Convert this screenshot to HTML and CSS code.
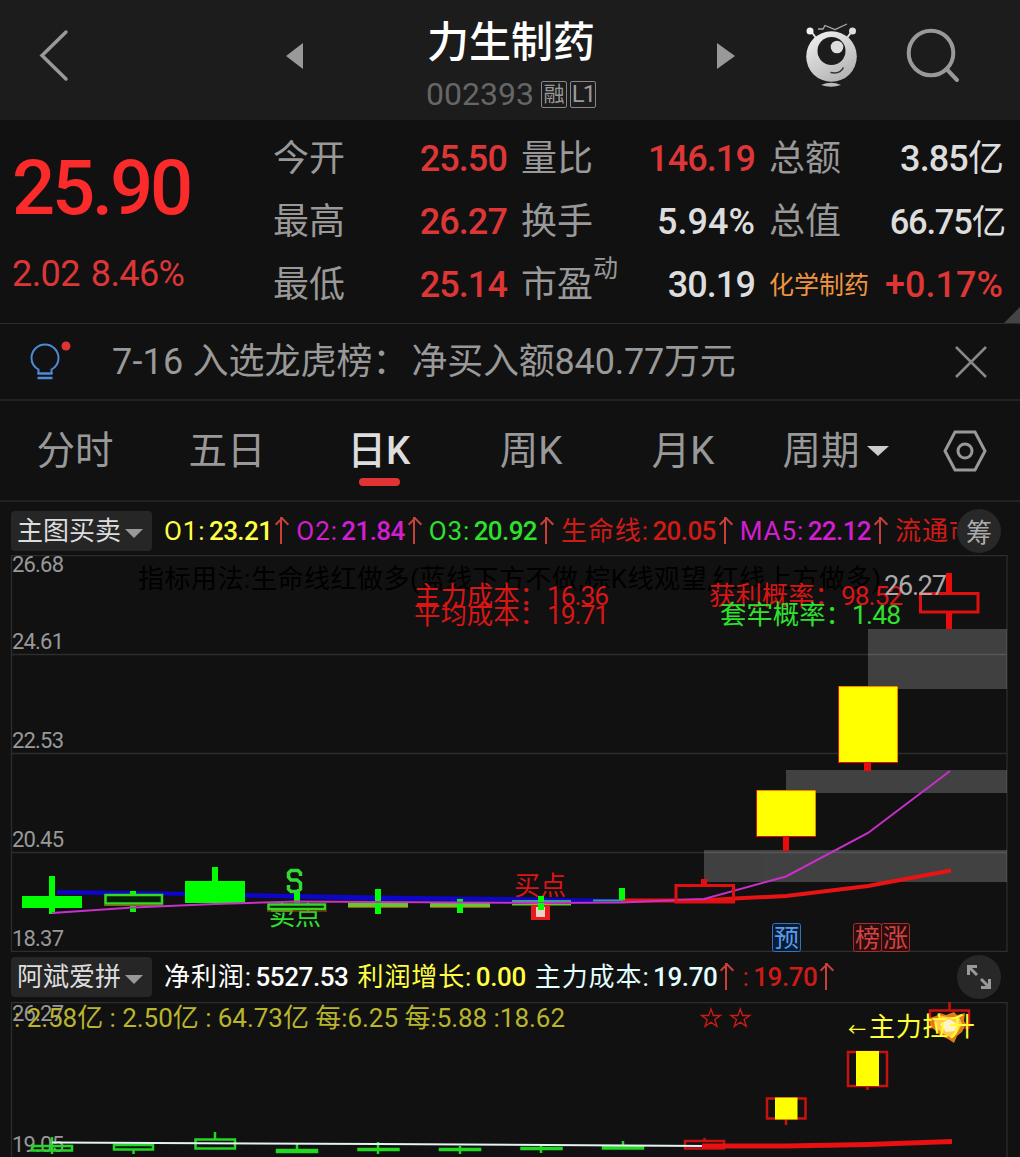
FILE: index.html
```html
<!DOCTYPE html>
<html lang="zh-CN">
<head>
<meta charset="UTF-8">
<meta name="viewport" content="width=device-width, initial-scale=1.0">
<title>力生制药 002393</title>
<link rel="stylesheet" href="styles.css">
</head>
<body>

<!-- 顶部导航 -->
<header class="header">
    <svg class="icon-back" width="32" height="56" viewBox="0 0 32 56"><path d="M28 5 4 28.500 28 52"/></svg>
    <svg class="icon-prev" width="20" height="28" viewBox="0 0 20 28"><path d="M0 14 17 1V27Z"/></svg>
    <div class="stock">
        <h1 class="stock-name">力生制药</h1>
        <div class="stock-code"><span class="code">002393</span><span class="tag">融</span><span class="tag l1">L1</span></div>
    </div>
    <svg class="icon-next" width="20" height="28" viewBox="0 0 20 28"><path d="M19 14 1 1V27Z"/></svg>
    <svg class="icon-robot" width="56" height="68" viewBox="0 0 56 68">
        <defs>
            <linearGradient id="ball" x1="0" y1="0" x2="0.6" y2="1">
                <stop offset="0" stop-color="#f4f4f4"/>
                <stop offset="1" stop-color="#b5b5b5"/>
            </linearGradient>
        </defs>
        <path d="M15 9 20 9 22 5.500 32 9.500 44 4" fill="none" stroke="#aaa" stroke-width="1.3"/>
        <path d="M8 11 13 18M49 11 44 18" stroke="#ddd" stroke-width="2"/>
        <circle cx="7" cy="11" r="3.5" fill="#f2f2f2"/>
        <circle cx="49.500" cy="11" r="3.500" fill="#ddd"/>
        <circle cx="28.500" cy="36.500" r="25.300" fill="url(#ball)"/>
        <circle cx="28.500" cy="31" r="14" fill="#1c1c1c"/>
        <circle cx="34" cy="27" r="6.300" fill="#ddd"/>
        <path d="M27.500 52.500Q37 54.500 40.500 47.500" fill="none" stroke="#333" stroke-width="1.500"/>
        <path d="M18 65Q28 60.500 38 65Q28 68.500 18 65Z" fill="#bbb"/>
    </svg>
    <svg class="icon-search" width="56" height="56" viewBox="0 0 56 56"><circle cx="26" cy="26" r="22.300"/><path d="M41.500 42 52 53"/></svg>
</header>

<!-- 行情 -->
<section class="quote">
    <div class="price-box">
        <div class="price">25.90</div>
        <div class="change"><span>2.02</span><span>8.46%</span></div>
    </div>
    <div class="stats">
        <div class="stat"><span class="label">今开</span><span class="value up">25.50</span></div>
        <div class="stat"><span class="label">量比</span><span class="value up">146.19</span></div>
        <div class="stat"><span class="label">总额</span><span class="value">3.85<em>亿</em></span></div>
        <div class="stat"><span class="label">最高</span><span class="value up">26.27</span></div>
        <div class="stat"><span class="label">换手</span><span class="value percent">5.94%</span></div>
        <div class="stat"><span class="label">总值</span><span class="value wide">66.75<em>亿</em></span></div>
        <div class="stat"><span class="label">最低</span><span class="value up">25.14</span></div>
        <div class="stat"><span class="label">市盈<sup>动</sup></span><span class="value">30.19</span></div>
        <div class="stat"><span class="label sector">化学制药</span><span class="value up percent">+0.17%</span></div>
    </div>
    <span class="corner"></span>
</section>

<!-- 龙虎榜提示 -->
<section class="news">
    <svg class="icon-bulb" width="44" height="42" viewBox="0 0 44 42">
        <g fill="none" stroke="#4f8ad6" stroke-width="2">
            <path d="M9.500 33V28.500C5 26 2.500 21.500 2.500 17A13.500 13.500 0 0 1 29.500 17C29.500 21.500 27 26 22.500 28.500V33"/>
            <path d="M8.500 32.500H23.500M8.500 37H23.500" stroke-width="2.500"/>
        </g>
        <circle cx="37" cy="5" r="4.500" fill="#e03434"/>
    </svg>
    <p class="news-text"><span class="date">7-16</span> 入选龙虎榜：<span class="money">净买入额840.77万元</span></p>
    <svg class="icon-close" width="34" height="34" viewBox="0 0 34 34"><path d="M2 2 32 32M32 2 2 32"/></svg>
</section>

<!-- 周期切换 -->
<nav class="tabs">
    <span class="tab">分时</span>
    <span class="tab">五日</span>
    <span class="tab active">日K</span>
    <span class="tab">周K</span>
    <span class="tab">月K</span>
    <span class="tab">周期<i class="caret"></i></span>
    <svg class="icon-setting" width="46" height="42" viewBox="0 0 46 42"><path d="M13 2H33L43 21 33 40H13L3 21Z"/><circle cx="23" cy="21" r="7"/></svg>
</nav>

<!-- 主图指标 -->
<div class="legend">
    <span class="picker">主图买卖<i class="caret"></i></span>
    <div class="legend-items">
        <span class="item yellow">O1:<b>23.21</b><i class="arrow"></i></span>
        <span class="item purple">O2:<b>21.84</b><i class="arrow"></i></span>
        <span class="item green">O3:<b>20.92</b><i class="arrow"></i></span>
        <span class="item red">生命线:<b>20.05</b><i class="arrow"></i></span>
        <span class="item purple">MA5:<b>22.12</b><i class="arrow"></i></span>
        <span class="item red">流通市值</span>
    </div>
    <span class="round">筹</span>
</div>

<!-- 主图K线 -->
<svg class="chart" width="1020" height="397" viewBox="0 555 1020 397">
    <g class="grid">
        <path d="M11.500 555.500H1007V951.500H11.500Z"/>
        <path d="M12 654.500H1007M12 753.500H1007M12 852.500H1007"/>
    </g>
    <text class="hint" x="138" y="588" textLength="743">指标用法:生命线红做多(蓝线下方不做,棕K线观望,红线上方做多)</text>
    <g class="gap">
        <rect x="868" y="629" width="139" height="60"/>
        <rect x="786" y="770" width="221" height="23"/>
        <rect x="704" y="850" width="303" height="32"/>
    </g>
    <g class="note red">
        <text x="414" y="605">主力成本：<tspan x="547" textLength="62">16.36</tspan></text>
        <text x="414" y="624">平均成本：<tspan x="547" textLength="62">19.71</tspan></text>
        <text x="709" y="605">获利概率：<tspan x="841" textLength="62">98.52</tspan></text>
    </g>
    <text class="note green" x="720" y="624">套牢概率：<tspan x="852" textLength="49">1.48</tspan></text>
    <g class="axis">
        <text x="12" y="572" textLength="52">26.68</text>
        <text x="12" y="649" textLength="52">24.61</text>
        <text x="12" y="748" textLength="52">22.53</text>
        <text x="12" y="847" textLength="52">20.45</text>
        <text x="12" y="946" textLength="52">18.37</text>
    </g>

    <text class="sell" x="269" y="925" textLength="52">卖点</text>
    <text class="buy" x="514" y="895" textLength="52">买点</text>

    <!-- 蜡烛 -->
    <path class="blue-line" d="M57 890 164 891.500 245 893 378 895.500 460 896.500 541 897.500 622 899V902L541 901.500 378 900.500 245 897.500 164 895.500 57 894.500Z"/>
    <path class="life-line" d="M622 900.500 704 900.500 734 898.500 786 896 868 886 951 870.500"/>
    <g class="down">
        <path d="M49 876h6v38h-6zM22 896h60v12h-60z"/>
        <path d="M212 867h6v15h-6zM185 881h60v22h-60z"/>
        <path d="M130 891h6v3h-6zM130 905h6v7h-6zM294 890h6v13h-6z"/>
        <path d="M619 888h6v12h-6z"/>
    </g>
    <path class="thin" d="M348 902.500h60v5h-60zM430 902.500h60v5h-60z"/>
    <path class="flat" d="M512 900h59v2h-59zM593 899.500h30v2h-30z"/>
    <path class="thin" d="M512 904h59v1.500h-59z"/>
    <path class="hollow-down" d="M105.500 895h56.500v8.500h-56.500zM268.500 904.500h56.500v4.500h-56.500z"/>
    <path class="edge" d="M104 905.500H163M267 911H327M348 907.500H408M430 907.500H490"/>
    <g class="down">
        <path d="M375 889h6v25h-6zM457 899h6v14h-6zM538 896h6v8h-6z"/>
    </g>
    <path class="ma-line" d="M52 913 133 907.500 215 904 297 901.500 378 902 541 903 622 902.500 704 899 786 876.500 868 833 950 771"/>
    <path class="hollow-up" d="M676 885.500h57.500v16.500h-57.500zM920.500 593.500h57.500v18.500h-57.500z"/>
    <g class="up">
        <path d="M701 879h6v6h-6zM783 836h6v15h-6zM864 762h7v9h-7zM946 573h6v20h-6zM946 612h6v17h-6z"/>
        <path d="M756 790h60v47h-60zM838 686h60v77h-60z"/>
    </g>
    <path class="limit" d="M757 790.500h58.500v45.500h-58.500zM839 686.500h58.500v75.500h-58.500z"/>

    <!-- 买卖标记 -->
    <path class="s-mark" d="M300.500 876V873L298 870.500H291L288.500 873V877L291 880H297L300.500 883V889L297 891.500H291L288.500 889V885"/>
    <path class="buy-mark" d="M531 905h19v15h-19z"/>
    <rect x="536" y="907" width="9" height="10" fill="#f0cfc4"/>
    <rect x="538" y="903" width="6" height="7" fill="#0f0"/>
    <text class="high" x="884" y="595" textLength="63">26.27</text>

    <g class="badge blue">
        <rect x="772.500" y="923.500" width="28" height="28" rx="2"/>
        <text x="774" y="947">预</text>
    </g>
    <g class="badge rose">
        <rect x="853.500" y="923.500" width="28" height="28" rx="2"/>
        <rect x="881.500" y="923.500" width="28" height="28" rx="2"/>
        <text x="855" y="947">榜</text>
        <text x="883" y="947">涨</text>
    </g>
</svg>

<!-- 副图指标 -->
<div class="legend second">
    <span class="picker">阿斌爱拼<i class="caret"></i></span>
    <div class="legend-items">
        <span class="item white">净利润:<b>5527.53</b></span>
        <span class="item yellow">利润增长:<b>0.00</b></span>
        <span class="item cyan">主力成本:<b>19.70</b><i class="arrow"></i></span>
        <span class="item red">:<b>19.70</b><i class="arrow"></i></span>
    </div>
    <span class="round">
        <svg width="26" height="26" viewBox="0 0 26 26"><path d="M2.500 11V2.500H11M3 3 11 11M23.500 15V23.500H15M23 23 15 15"/></svg>
    </span>
</div>

<!-- 副图 -->
<svg class="chart" width="1020" height="155" viewBox="0 1002 1020 155">
    <path class="grid" d="M11.500 1157V1002.500H1007V1157"/>
    <g class="axis">
        <text x="12" y="1021" textLength="52">26.27</text>
        <text x="12" y="1152" textLength="52">19.05</text>
    </g>
    <text class="finance" x="14" y="1027" textLength="551">: 2.58亿 : 2.50亿 : 64.73亿 每:6.25 每:5.88 :18.62</text>
    <path class="stars" d="M711 1009 713.300 1015.500H720.500L714.800 1019.500 717 1026.300 711 1022.200 705 1026.300 707.200 1019.500 701.500 1015.500H708.700ZM740.300 1009 742.600 1015.500H749.800L744.100 1019.500 746.300 1026.300 740.300 1022.200 734.300 1026.300 736.500 1019.500 730.800 1015.500H738Z"/>
    <path class="small-down" d="M32 1146h40v4.500h-40zM114 1145h39v4.500h-39zM195.500 1139.500h39.500v9h-39.500zM277 1150h40v2h-40zM358.500 1149h40v1h-40zM440 1149h40v1h-40zM521.500 1148h40v1h-40zM603 1146.500h40v2h-40zM52 1137V1154M133.500 1150V1154M215 1132V1139M297 1144V1149M378 1142V1154M460 1146V1154M541 1145V1153M623 1141V1148"/>
    <path class="small-up" d="M685 1141h39v7.500h-39zM704.500 1138V1141M767 1098.500h38.500v20h-38.500zM786 1119V1125M848 1052h39v34h-39zM867.500 1086V1090M930 1010.500h39v17h-39zM949.500 1002V1010"/>
    <path class="cost-line" d="M52 1142.500 378 1144 704 1146"/>
    <path class="red-line" d="M702 1146 786 1146 868 1144.500 952 1141.500"/>
    <path class="limit" d="M775 1097.500h22.500v22h-22.500zM856 1051h23v35h-23z"/>
    <g class="flame">
        <path fill="#e07c16" d="M929 1018 936 1016 940 1013 946 1015 954 1012 957 1015 965 1013 964 1021 966 1024 962 1032 957 1036 954 1043 948 1039 941 1036 936 1031 931 1027Z"/>
        <path fill="#ffc94a" d="M934 1020 942 1016 948 1017 959 1017 962 1024 957 1033 952 1038 944 1034 936 1028Z"/>
        <path fill="#fff4c8" d="M940 1024 949 1019 957 1024 955 1031 946 1032Z"/>
    </g>
    <text class="rise" x="870" y="1036"><tspan class="tip" x="848">←</tspan><tspan x="869" textLength="106">主力拉升</tspan></text>
</svg>

</body>
</html>
```
FILE: styles.css
```css
* {
    box-sizing: border-box;
}
body {
    margin: 0;
    width: 1020px;
    height: 1157px;
    overflow: hidden;
    background-color: #111;
    color: #999;
    font-family: Roboto, "Noto Sans CJK SC", sans-serif;
}
svg {
    display: block;
    flex: none;
}
i, b, em {
    font-style: normal;
}
b {
    font-weight: 500;
}
em {
    font-weight: 400;
}

/* 顶部 */
.header {
    display: flex;
    align-items: flex-start;
    height: 120px;
    background-color: #1c1c1c;
}
.icon-back {
    margin: 27px 0 0 38px;
    fill: none;
    stroke: #999;
    stroke-width: 3.5;
    stroke-linecap: round;
}
.icon-prev, .icon-next {
    margin-top: 42px;
    fill: #999;
}
.icon-prev {
    margin-left: 216px;
}
.stock {
    width: 410px;
    text-align: center;
}
.stock-name {
    margin: 13px 0 0;
    font-size: 42px;
    font-weight: 500;
    line-height: 60px;
    color: #fff;
}
.stock-code {
    display: flex;
    justify-content: center;
    align-items: center;
    gap: 3px;
    height: 42px;
}
.code {
    margin-right: 4px;
    font-size: 32px;
    color: #666;
}
.tag {
    width: 26px;
    height: 27px;
    border: 1px solid #888;
    border-radius: 2px;
    font-size: 21px;
    line-height: 25px;
}
.l1 {
    font-size: 24px;
    letter-spacing: -2px;
}
.icon-robot {
    margin: 20px 0 0 67px;
}
.icon-search {
    margin: 27px 0 0 46px;
    fill: none;
    stroke: #999;
    stroke-width: 4;
    stroke-linecap: round;
}

/* 行情 */
.quote {
    position: relative;
    display: flex;
    height: 204px;
    border-bottom: 1px solid #2b2b2b;
}
.price-box {
    width: 273px;
    padding: 28px 0 0 12px;
}
.price {
    font-size: 76px;
    font-weight: 500;
    line-height: 80px;
    letter-spacing: -3.2px;
    color: #fb2b2b;
}
.change {
    display: flex;
    gap: 11px;
    margin-top: 24px;
    font-size: 36px;
    font-weight: 450;
    line-height: 44px;
    letter-spacing: -0.6px;
    color: #dd3636;
}
.stats {
    display: grid;
    grid-template-columns: repeat(3, 234px);
    grid-auto-rows: 63px;
    column-gap: 14px;
    padding-top: 7px;
}
.stat {
    display: flex;
    justify-content: space-between;
    align-items: center;
    white-space: nowrap;
}
.label {
    font-size: 36px;
    line-height: 50px;
}
.label sup {
    font-size: 25px;
    line-height: 0;
    vertical-align: 20px;
}
.sector {
    padding-top: 3px;
    font-size: 25px;
    color: #ee9440;
}
.value {
    font-size: 36px;
    font-weight: 500;
    line-height: 50px;
    letter-spacing: -0.9px;
    color: #ddd;
}
.percent {
    letter-spacing: 0;
}
.wide {
    margin-right: -2px;
    font-size: 34.5px;
    letter-spacing: -1.2px;
}
.up {
    color: #dd3636;
}
.corner {
    position: absolute;
    right: 0;
    bottom: 0;
    border-left: 16px solid transparent;
    border-bottom: 16px solid #444;
}

/* 提示 */
.news {
    display: flex;
    align-items: center;
    height: 77px;
    padding: 0 32px 0 29px;
    border-bottom: 2px solid #222;
}
.news-text {
    flex: 1;
    margin: 0 0 0 39px;
    font-size: 36px;
    line-height: 50px;
}
.date {
    letter-spacing: 0.2px;
}
.money {
    margin-left: 3px;
    letter-spacing: -0.2px;
}
.icon-close {
    fill: none;
    stroke: #888;
    stroke-width: 2.5;
}

/* 周期 */
.tabs {
    display: flex;
    align-items: center;
    height: 101px;
    border-bottom: 2px solid #222;
}
.tab {
    position: relative;
    width: 152px;
    padding-right: 2px;
    font-size: 38.5px;
    line-height: 54px;
    text-align: center;
    white-space: nowrap;
}
.tab:nth-child(6) {
    width: 166px;
    padding-right: 15px;
}
.active {
    font-weight: 500;
    color: #ddd;
}
.active::after {
    content: "";
    position: absolute;
    left: 55px;
    bottom: -8px;
    width: 41px;
    height: 8px;
    border-radius: 4px;
    background-color: #e03434;
}
.caret {
    display: inline-block;
    margin-left: 7px;
    border: 11px solid transparent;
    border-top: 10px solid #ccc;
    border-bottom: 0;
    vertical-align: 8px;
}
.icon-setting {
    margin-left: 16px;
    fill: none;
    stroke: #999;
    stroke-width: 3;
}

/* 指标行 */
.legend {
    display: flex;
    align-items: center;
    height: 53px;
    padding: 4px 19px 0 11px;
}
.second {
    height: 50px;
    padding-top: 0;
}
.picker {
    width: 141px;
    height: 40px;
    padding-left: 6px;
    border-radius: 4px;
    background-color: #262626;
    color: #ddd;
    font-size: 26px;
    line-height: 40px;
    white-space: nowrap;
}
.picker .caret {
    margin-left: 4px;
    border-width: 9px;
    border-top-color: #999;
    border-bottom: 0;
    vertical-align: 2px;
}
.legend-items {
    flex: 1;
    display: flex;
    gap: 8px;
    width: 0;
    padding-left: 12px;
    overflow: hidden;
    font-size: 26px;
    line-height: 40px;
    white-space: nowrap;
}
.second .legend-items {
    gap: 9px;
}
.item {
    flex: none;
    letter-spacing: 0.9px;
}
.item b {
    margin-left: 3.5px;
    letter-spacing: -0.6px;
}
.second .item b {
    letter-spacing: -0.4px;
}
.yellow { color: #ff4; }
.purple { color: #d11ed1; }
.green { color: #2fe02f; }
.red { color: #cf1b16; }
.white { color: #fff; }
.cyan { color: #e0ffff; }
.arrow {
    position: relative;
    display: inline-block;
    width: 14px;
    height: 27px;
    margin-left: 2px;
    vertical-align: -4px;
    background: linear-gradient(#c9403a, #c9403a) 6px 0 / 2px 27px no-repeat;
}
.arrow::before {
    content: "";
    position: absolute;
    left: 3px;
    top: 2px;
    width: 8px;
    height: 8px;
    border: solid #c9403a;
    border-width: 2px 0 0 2px;
    transform: rotate(45deg);
}
.round {
    display: flex;
    justify-content: center;
    align-items: center;
    width: 44px;
    height: 44px;
    border-radius: 50%;
    background-color: #282828;
    font-size: 26px;
    color: #aaa;
}
.round svg {
    fill: none;
    stroke: #999;
    stroke-width: 3;
}

/* 图表 */
.grid {
    fill: none;
    stroke: #2d2d2d;
    stroke-width: 1.3;
}
.gap {
    fill: #fff;
    opacity: 0.2;
}
.hint {
    font-size: 26px;
    fill: #000;
}
.note {
    font-size: 26.4px;
}
.note tspan {
    font-weight: 450;
}
.note.red, .buy {
    fill: #d81616;
}
.note.green, .sell {
    fill: #2fe02f;
}
.sell, .buy {
    font-size: 26px;
}
.axis {
    font-size: 22px;
    font-weight: 450;
    fill: #999;
}
.high {
    font-size: 27px;
    fill: #aaa;
}
.down {
    fill: #0f0;
}
.thin {
    fill: #62c832;
}
.flat {
    fill: #3fa08c;
}
.edge {
    stroke: #a3510f;
    stroke-width: 1;
}
.hollow-down {
    fill: #032203;
    stroke: #35d822;
    stroke-width: 2.5;
}
.up {
    fill: #e80c0c;
}
.hollow-up {
    fill: none;
    stroke: #e01010;
    stroke-width: 3;
}
.limit {
    fill: #ff0;
}
.blue-line {
    fill: #0d05c8;
}
.life-line {
    fill: none;
    stroke: #e81414;
    stroke-width: 4;
}
.ma-line {
    fill: none;
    stroke: #c92fc9;
    stroke-width: 2;
}
.s-mark {
    fill: none;
    stroke: #35d835;
    stroke-width: 3.5;
}
.buy-mark {
    fill: #e81c1c;
}
.badge {
    font-size: 25px;
}
.blue rect {
    fill: #0a1c33;
    stroke: #3872b8;
}
.blue text {
    fill: #5a9bea;
}
.rose rect {
    fill: #2b0d0d;
    stroke: #a33030;
}
.rose text {
    fill: #cf4444;
}
.finance {
    font-size: 26px;
    fill: #b9b52c;
}
.stars {
    fill: none;
    stroke: #cf1b16;
    stroke-width: 1.3;
}
.small-down {
    fill: none;
    stroke: #22d822;
    stroke-width: 2.5;
}
.small-up {
    fill: none;
    stroke: #c81212;
    stroke-width: 2.5;
}
.cost-line {
    fill: none;
    stroke: #e4f4f4;
    stroke-width: 2;
}
.red-line {
    fill: none;
    stroke: #e81010;
    stroke-width: 5;
}
.rise {
    font-size: 26px;
    fill: #ff3;
}
.tip {
    font-size: 18px;
}
```
